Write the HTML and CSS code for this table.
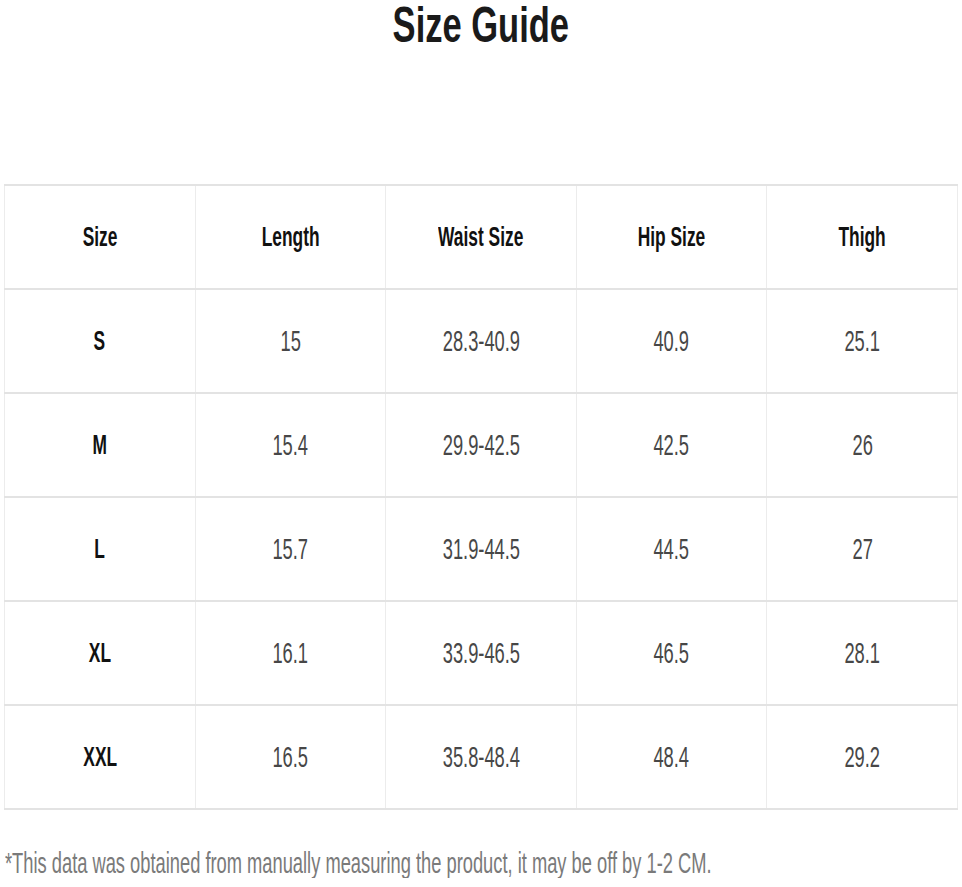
FILE: index.html
```html
<!DOCTYPE html>
<html>
<head>
<meta charset="utf-8">
<link rel="stylesheet" href="styles.css">
</head>
<body>
<h1 class="title"><span class="sq sq-title">Size Guide</span></h1>
<table class="guide">
  <thead>
    <tr>
      <th><span class="sq sq-head">Size</span></th>
      <th><span class="sq sq-head">Length</span></th>
      <th><span class="sq sq-head">Waist Size</span></th>
      <th><span class="sq sq-head">Hip Size</span></th>
      <th><span class="sq sq-head">Thigh</span></th>
    </tr>
  </thead>
  <tbody>
    <tr><th><span class="sq sq-head">S</span></th><td><span class="sq sq-data">15</span></td><td><span class="sq sq-data">28.3-40.9</span></td><td><span class="sq sq-data">40.9</span></td><td><span class="sq sq-data">25.1</span></td></tr>
    <tr><th><span class="sq sq-head">M</span></th><td><span class="sq sq-data">15.4</span></td><td><span class="sq sq-data">29.9-42.5</span></td><td><span class="sq sq-data">42.5</span></td><td><span class="sq sq-data">26</span></td></tr>
    <tr><th><span class="sq sq-head">L</span></th><td><span class="sq sq-data">15.7</span></td><td><span class="sq sq-data">31.9-44.5</span></td><td><span class="sq sq-data">44.5</span></td><td><span class="sq sq-data">27</span></td></tr>
    <tr><th><span class="sq sq-head">XL</span></th><td><span class="sq sq-data">16.1</span></td><td><span class="sq sq-data">33.9-46.5</span></td><td><span class="sq sq-data">46.5</span></td><td><span class="sq sq-data">28.1</span></td></tr>
    <tr><th><span class="sq sq-head">XXL</span></th><td><span class="sq sq-data">16.5</span></td><td><span class="sq sq-data">35.8-48.4</span></td><td><span class="sq sq-data">48.4</span></td><td><span class="sq sq-data">29.2</span></td></tr>
  </tbody>
</table>
<p class="note"><span class="sq sq-note">*This data was obtained from manually measuring the product, it may be off by 1-2 CM.</span></p>
</body>
</html>
```
FILE: styles.css
```css
html, body {
  margin: 0;
  padding: 0;
  background: #ffffff;
}
body {
  font-family: "Liberation Sans", Arial, sans-serif;
  width: 962px;
  overflow: hidden;
}
.sq {
  display: inline-block;
  white-space: nowrap;
  transform-origin: center center;
}
.title {
  margin: 0;
  height: 50px;
  line-height: 50px;
  text-align: center;
  font-size: 50px;
  font-weight: bold;
  color: #1a1a1a;
}
.sq-title {
  transform: scaleX(0.69);
}
.guide {
  margin: 134px 0 0 4px;
  width: 954px;
  border-collapse: collapse;
  table-layout: fixed;
  border-bottom: 2px solid #e3e3e3;
}
.guide th,
.guide td {
  height: 102px;
  padding: 0;
  text-align: center;
  vertical-align: middle;
  border-top: 2px solid #e3e3e3;
  border-left: 1px solid #ececec;
  border-right: 1px solid #ececec;
}
.guide th {
  font-weight: bold;
  color: #111111;
}
.guide td {
  color: #474747;
}
.sq-head {
  font-size: 28px;
  line-height: 30px;
  transform: scaleX(0.62);
}
.sq-data {
  font-size: 30px;
  line-height: 30px;
  transform: scaleX(0.61);
}
.note {
  margin: 38px 0 0 5px;
  font-size: 30px;
  line-height: 30px;
  color: #7a7a7a;
  overflow: hidden;
}
.sq-note {
  transform-origin: left center;
  transform: scaleX(0.61);
}
```
